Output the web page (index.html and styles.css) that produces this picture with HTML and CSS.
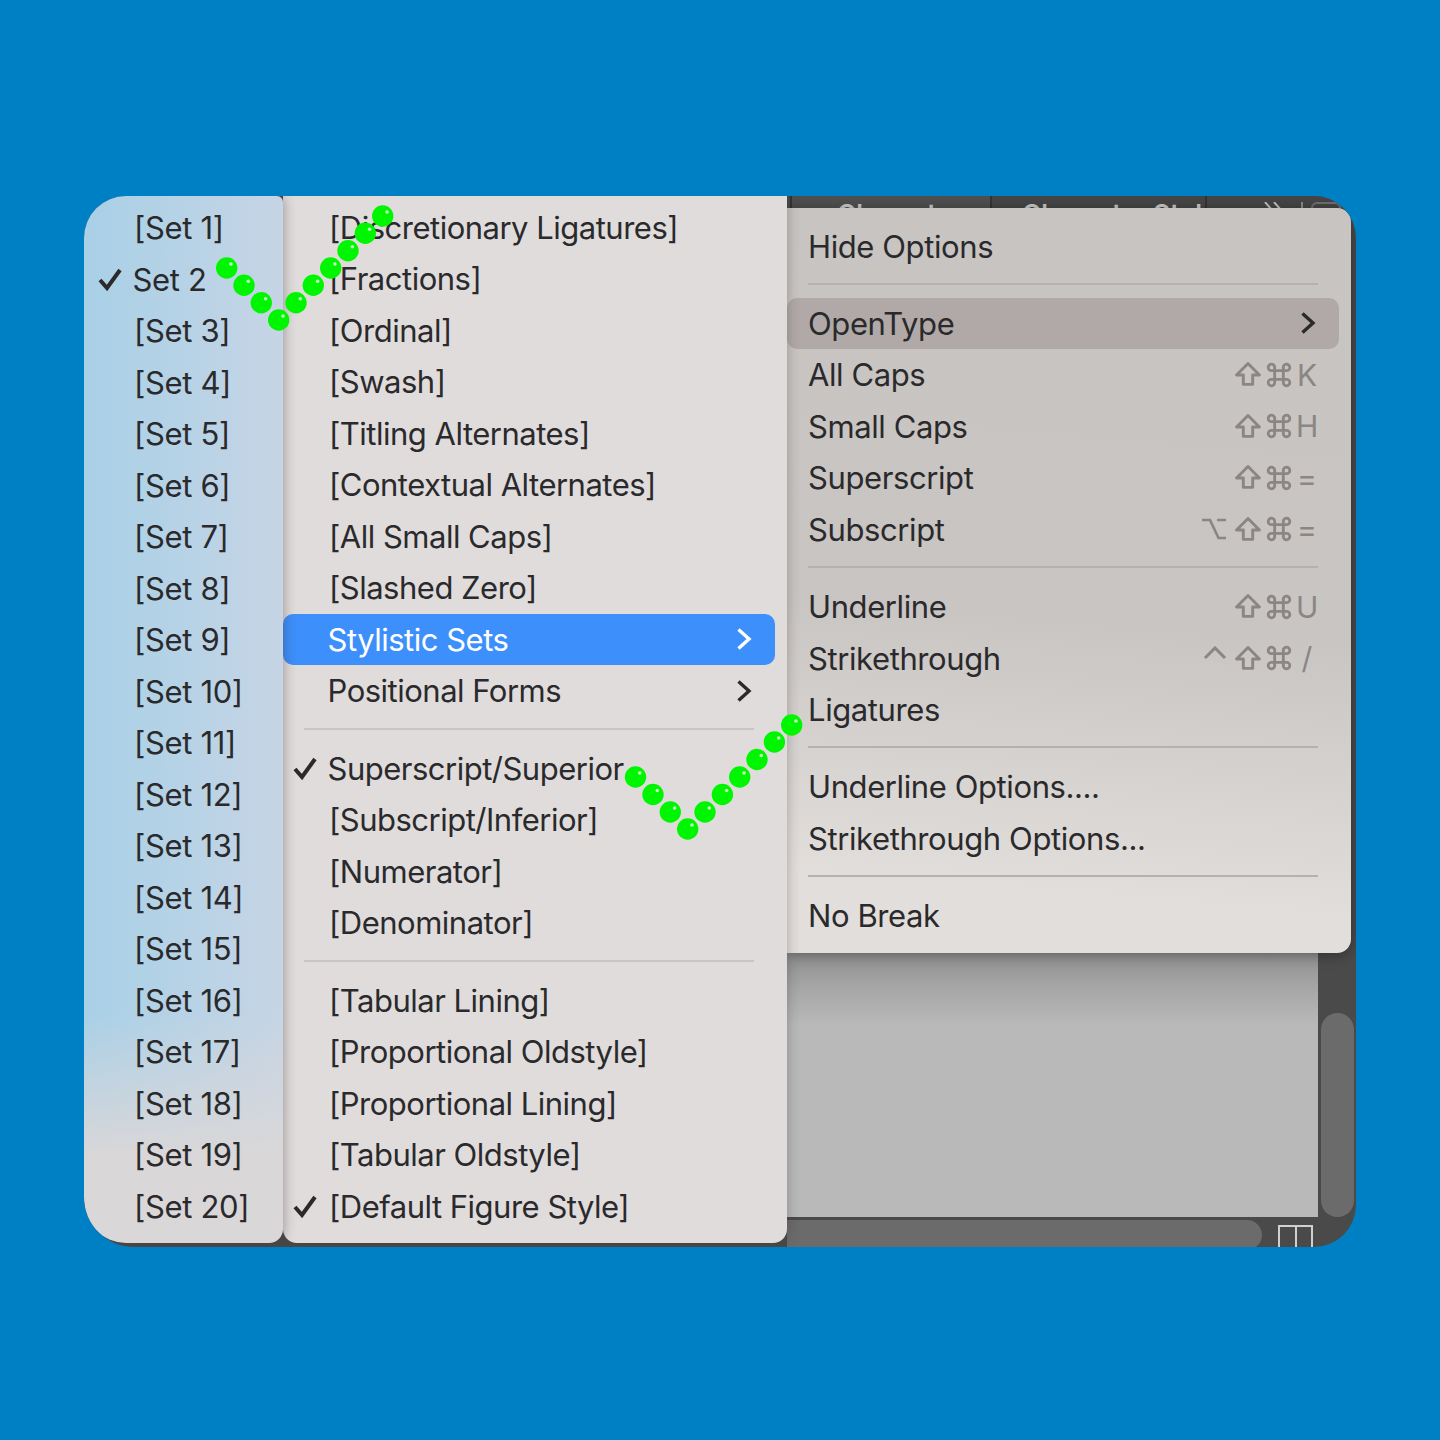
FILE: index.html
```html
<!DOCTYPE html>
<html lang="en">
<head>
    <meta charset="UTF-8">
    <meta name="viewport" content="width=device-width, initial-scale=1.0">
    <title>OpenType menu</title>
    <link rel="stylesheet" href="styles.css">
</head>
<body>
    <svg class="defs" width="0" height="0" aria-hidden="true">
        <symbol id="i-check" viewBox="0 0 24 24"><path d="M2 13l7 8L22 3" fill="none" stroke="currentColor" stroke-width="4"/></symbol>
        <symbol id="i-chev" viewBox="0 0 16 24"><path d="M2.500 2.500L13 12 2.500 21.500" fill="none" stroke="currentColor" stroke-width="3.400"/></symbol>
        <symbol id="i-shift" viewBox="0 0 26 24"><path d="M13 1.500L2 12.500h6.500v9h9v-9H24z" fill="none" stroke="currentColor" stroke-width="2.800" stroke-linejoin="round"/></symbol>
        <symbol id="i-cmd" viewBox="0 0 24 24"><path d="M8 8h8v8H8zM8 8H5.500A3 3 0 1 1 8 5.500zM16 8V5.500A3 3 0 1 1 18.500 8zM16 16h2.500A3 3 0 1 1 16 18.500zM8 16v2.500A3 3 0 1 1 5.500 16z" fill="none" stroke="currentColor" stroke-width="2.600"/></symbol>
        <symbol id="i-opt" viewBox="0 0 26 24"><path d="M1 3h8l8.500 18H25M16 3h9" fill="none" stroke="currentColor" stroke-width="2.700"/></symbol>
        <symbol id="i-ctrl" viewBox="0 0 24 14"><path d="M2 12L12 2l10 10" fill="none" stroke="currentColor" stroke-width="3"/></symbol>
    </svg>

    <div class="stage">
        <!-- Janela do fundo -->
        <div class="tabs">
            <span class="tab tab-first">Character</span>
            <span class="tab">Character Styles</span>
            <div class="tab-tools">
                <svg class="tab-more" viewBox="0 0 20 12"><path d="M2 0l7 8M11 0l7 8" fill="none" stroke="#bdbdbd" stroke-width="2"/></svg>
                <div class="tab-line"></div>
                <div class="tab-menu"></div>
            </div>
        </div>
        <div class="panel"></div>
        <div class="scroll-v"></div>
        <div class="scroll-h"></div>
        <div class="book-icon"></div>

        <div class="menus">
            <!-- Stylistic sets -->
            <ul class="menu menu-sets">
                <li class="row"><span>[Set 1]</span></li>
                <li class="row on"><svg class="check"><use href="#i-check"/></svg><span class="plain">Set 2</span></li>
                <li class="row"><span>[Set 3]</span></li>
                <li class="row"><span>[Set 4]</span></li>
                <li class="row"><span>[Set 5]</span></li>
                <li class="row"><span>[Set 6]</span></li>
                <li class="row"><span>[Set 7]</span></li>
                <li class="row"><span>[Set 8]</span></li>
                <li class="row"><span>[Set 9]</span></li>
                <li class="row"><span>[Set 10]</span></li>
                <li class="row"><span>[Set 11]</span></li>
                <li class="row"><span>[Set 12]</span></li>
                <li class="row"><span>[Set 13]</span></li>
                <li class="row"><span>[Set 14]</span></li>
                <li class="row"><span>[Set 15]</span></li>
                <li class="row"><span>[Set 16]</span></li>
                <li class="row"><span>[Set 17]</span></li>
                <li class="row"><span>[Set 18]</span></li>
                <li class="row"><span>[Set 19]</span></li>
                <li class="row"><span>[Set 20]</span></li>
            </ul>

            <!-- OpenType -->
            <ul class="menu menu-open">
                <li class="row"><span>[Discretionary Ligatures]</span></li>
                <li class="row"><span>[Fractions]</span></li>
                <li class="row"><span>[Ordinal]</span></li>
                <li class="row"><span>[Swash]</span></li>
                <li class="row"><span>[Titling Alternates]</span></li>
                <li class="row"><span>[Contextual Alternates]</span></li>
                <li class="row"><span>[All Small Caps]</span></li>
                <li class="row"><span>[Slashed Zero]</span></li>
                <li class="row active"><span class="plain">Stylistic Sets</span><svg class="chev"><use href="#i-chev"/></svg></li>
                <li class="row"><span class="plain">Positional Forms</span><svg class="chev"><use href="#i-chev"/></svg></li>
                <li class="sep"></li>
                <li class="row on"><svg class="check"><use href="#i-check"/></svg><span class="plain">Superscript/Superior</span></li>
                <li class="row"><span>[Subscript/Inferior]</span></li>
                <li class="row"><span>[Numerator]</span></li>
                <li class="row"><span>[Denominator]</span></li>
                <li class="sep"></li>
                <li class="row"><span>[Tabular Lining]</span></li>
                <li class="row"><span>[Proportional Oldstyle]</span></li>
                <li class="row"><span>[Proportional Lining]</span></li>
                <li class="row"><span>[Tabular Oldstyle]</span></li>
                <li class="row on"><svg class="check"><use href="#i-check"/></svg><span>[Default Figure Style]</span></li>
            </ul>

            <!-- Menu do painel -->
            <ul class="menu menu-panel">
                <li class="row"><span>Hide Options</span></li>
                <li class="sep"></li>
                <li class="row hover"><span>OpenType</span><svg class="chev"><use href="#i-chev"/></svg></li>
                <li class="row"><span>All Caps</span>
                    <div class="keys"><svg class="k-shift"><use href="#i-shift"/></svg><svg class="k-cmd"><use href="#i-cmd"/></svg><b>K</b></div></li>
                <li class="row"><span>Small Caps</span>
                    <div class="keys"><svg class="k-shift"><use href="#i-shift"/></svg><svg class="k-cmd"><use href="#i-cmd"/></svg><b>H</b></div></li>
                <li class="row"><span>Superscript</span>
                    <div class="keys"><svg class="k-shift"><use href="#i-shift"/></svg><svg class="k-cmd"><use href="#i-cmd"/></svg><b>=</b></div></li>
                <li class="row"><span>Subscript</span>
                    <div class="keys"><svg class="k-opt"><use href="#i-opt"/></svg><svg class="k-shift"><use href="#i-shift"/></svg><svg class="k-cmd"><use href="#i-cmd"/></svg><b>=</b></div></li>
                <li class="sep"></li>
                <li class="row"><span>Underline</span>
                    <div class="keys"><svg class="k-shift"><use href="#i-shift"/></svg><svg class="k-cmd"><use href="#i-cmd"/></svg><b>U</b></div></li>
                <li class="row"><span>Strikethrough</span>
                    <div class="keys"><svg class="k-ctrl"><use href="#i-ctrl"/></svg><svg class="k-shift"><use href="#i-shift"/></svg><svg class="k-cmd"><use href="#i-cmd"/></svg><b>/</b></div></li>
                <li class="row"><span>Ligatures</span></li>
                <li class="sep"></li>
                <li class="row"><span>Underline Options....</span></li>
                <li class="row"><span>Strikethrough Options...</span></li>
                <li class="sep"></li>
                <li class="row"><span>No Break</span></li>
            </ul>
        </div>

        <!-- Marcas verdes por cima dos menus -->
        <svg class="marks" viewBox="84 196 1272 1051">
            <defs>
                <g id="dot"><circle r="10.700" fill="#00f600"/><circle cx="4.300" cy="-4" r="1.800" fill="#c8f7c8"/></g>
            </defs>
            <use href="#dot" x="226.700" y="268"/>
            <use href="#dot" x="244" y="285.300"/>
            <use href="#dot" x="261.300" y="302.700"/>
            <use href="#dot" x="278.700" y="320"/>
            <use href="#dot" x="296" y="302.700"/>
            <use href="#dot" x="313.300" y="285.300"/>
            <use href="#dot" x="330.700" y="268"/>
            <use href="#dot" x="348" y="250.700"/>
            <use href="#dot" x="365.300" y="233.300"/>
            <use href="#dot" x="382.700" y="216"/>
            <use href="#dot" x="635.500" y="777"/>
            <use href="#dot" x="653" y="794.500"/>
            <use href="#dot" x="670.300" y="812"/>
            <use href="#dot" x="687.700" y="829"/>
            <use href="#dot" x="705" y="812"/>
            <use href="#dot" x="722.400" y="794.500"/>
            <use href="#dot" x="739.700" y="777"/>
            <use href="#dot" x="757" y="759.500"/>
            <use href="#dot" x="774.400" y="742"/>
            <use href="#dot" x="791.700" y="725"/>
        </svg>
    </div>
</body>
</html>
```

FILE: styles.css
```css
* {
  margin: 0;
  padding: 0;
  box-sizing: border-box;
}

body {
  background-color: #0080c4;
  font-family: 'Inter', 'Noto Sans', sans-serif;
  height: 1440px;
  padding: 196px 84px 0;
  color: #2a2a2c;
}

.defs {
  position: absolute;
}

/* Janela */
.stage {
  position: relative;
  width: 1272px;
  height: 1051px;
  border-radius: 42px 42px 42px 50px;
  overflow: hidden;
  background-color: #4a4a4a;
}

.tabs {
  position: absolute;
  top: 0;
  left: 706px;
  display: flex;
  height: 30px;
}

.tab {
  width: 200px;
  padding: 2px 0 0 45px;
  font-size: 26px;
  font-weight: 600;
  color: #c8c8c8;
  background-color: #4f4f4f;
  border-left: 2px solid #333;
  white-space: nowrap;
  overflow: hidden;
}

.tab + .tab {
  width: 215px;
  padding-left: 30px;
  background-color: #454545;
}

.tab-tools {
  display: flex;
  align-items: flex-start;
  gap: 8px;
  padding: 6px 0 0 56px;
  border-left: 2px solid #333;
  background-color: #454545;
}

.tab-more {
  width: 20px;
  height: 12px;
}

.tab-line {
  width: 2px;
  height: 24px;
  margin-left: 10px;
  background-color: #8a8a8a;
}

.tab-menu {
  width: 30px;
  height: 30px;
  border: 2px solid #707070;
  border-radius: 6px;
  background: linear-gradient(#9a9a9a, #9a9a9a) 6px 4px / 16px 4px no-repeat;
}

.panel {
  position: absolute;
  left: 700px;
  top: 700px;
  width: 534px;
  height: 321px;
  background: linear-gradient(to bottom, #8f8f8f 57px, #a5a5a5 90px, #b9b9b9 130px);
}

.scroll-v {
  position: absolute;
  left: 1237px;
  top: 817px;
  width: 33px;
  height: 204px;
  border-radius: 17px;
  background-color: #6b6b6b;
}

.scroll-h {
  position: absolute;
  left: 703px;
  top: 1024px;
  width: 475px;
  height: 30px;
  border-radius: 0 15px 15px 0;
  background-color: #6b6b6b;
}

.book-icon {
  position: absolute;
  left: 1194px;
  top: 1029px;
  width: 35px;
  height: 30px;
  border: 2px solid #d0d0d0;
  background: linear-gradient(#d0d0d0, #d0d0d0) center / 2px 100% no-repeat;
}

/* Menus */
.menus {
  position: relative;
  display: flex;
  align-items: flex-start;
}

.menu {
  list-style: none;
  font-size: 31px;
  font-weight: 430;
  letter-spacing: -0.5px;
}

.menu-sets {
  position: relative;
  z-index: 2;
  width: 199px;
  height: 1047px;
  padding-top: 6px;
  letter-spacing: -0.35px;
  border-radius: 0 6px 14px 42px;
  background: linear-gradient(to bottom, rgba(218,215,216,0) 78%, #dad7d8 92%), linear-gradient(to right, #a8d0e7, #c6d5e5);
  box-shadow: 1px 0 12px rgba(60, 50, 50, 0.4);
}

.menu-open {
  position: relative;
  z-index: 1;
  width: 504px;
  height: 1047px;
  padding-top: 5.500px;
  border-radius: 0 0 14px 14px;
  background-color: #e0dcdc;
  box-shadow: 1px 0 12px rgba(60, 50, 50, 0.3);
}

.menu-panel {
  position: relative;
  z-index: 0;
  width: 564px;
  height: 745px;
  margin-top: 12px;
  padding-top: 12.500px;
  letter-spacing: -0.4px;
  border-radius: 0 14px 14px 0;
  background: linear-gradient(185deg, #c8c4c1 0%, #c9c5c3 55%, #e2dedb 90%);
  box-shadow: 0 2px 14px rgba(0, 0, 0, 0.35);
}

.row {
  position: relative;
  display: flex;
  align-items: center;
  justify-content: space-between;
  height: 51.5px;
  white-space: nowrap;
}

.menu-sets .row {
  padding-left: 50px;
}

.menu-open .row {
  padding: 0 35px 0 46px;
}

.menu-panel .row {
  padding: 0 31px 0 21px;
}

.plain {
  margin-left: -1.500px;
}

.check {
  position: absolute;
  left: 14px;
  top: 13px;
  width: 24px;
  height: 24px;
}

.menu-open .check {
  left: 10px;
}

.chev {
  width: 16px;
  height: 24px;
  flex: none;
}

.active {
  margin: 0 12px 0 0;
  padding-right: 23px !important;
  border-radius: 10px;
  background-color: #3d8ffb;
  color: #fff;
}

.hover {
  margin: 0 12px 0 0;
  padding-right: 23px !important;
  border-radius: 10px;
  background-color: #b1a9a7;
}

.sep {
  height: 2px;
  background-color: #cac4c3;
  margin: 11px 33px 13px 21px;
}

.menu-panel .sep {
  background-color: #b6b1ad;
  margin: 11px 33px 12.700px 21px;
}

/* Atalhos */
.keys {
  display: flex;
  align-items: center;
  gap: 4px;
  color: #8b8684;
  margin-right: 2px;
}

.keys b {
  font-weight: 400;
  font-size: 30px;
  letter-spacing: 0;
  width: 22px;
  text-align: center;
}

.keys svg {
  flex: none;
}

.k-shift {
  width: 28px;
  height: 25px;
  margin-left: -1px;
}

.k-cmd {
  width: 26px;
  height: 26px;
}

.k-opt {
  width: 26px;
  height: 24px;
  margin-right: 4px;
}

.k-ctrl {
  width: 24px;
  height: 14px;
  margin: -10px 4px 0 0;
}

.marks {
  position: absolute;
  z-index: 3;
  left: 0;
  top: 0;
  width: 1272px;
  height: 1051px;
}
```
